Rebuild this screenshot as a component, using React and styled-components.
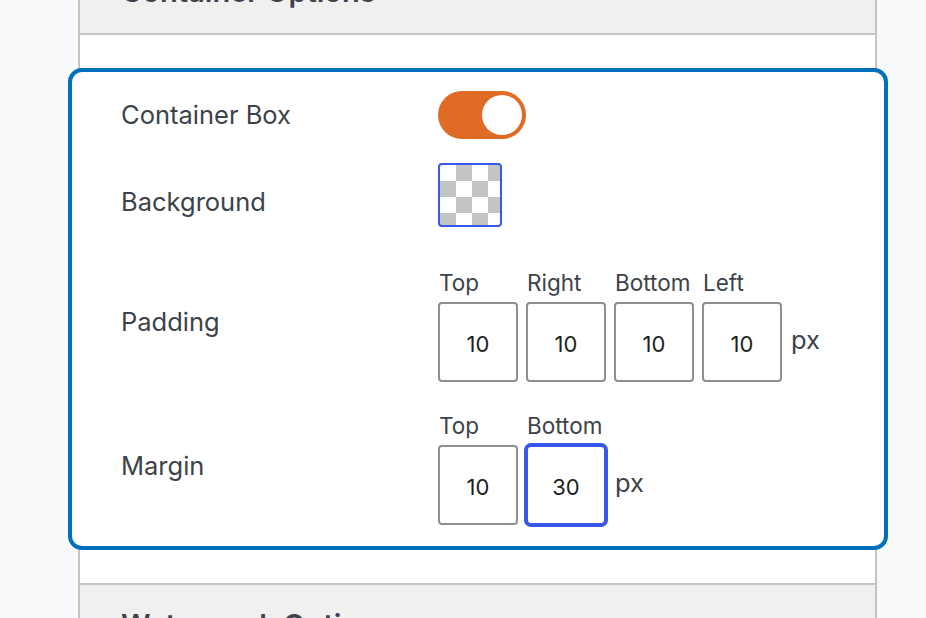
import React from "react";
import styled, { createGlobalStyle } from "styled-components";

const GlobalStyle = createGlobalStyle`
  html, body {
    margin: 0;
    padding: 0;
    background: #f8f9fb;
  }
  body {
    font-family: Inter, "Noto Sans", "Liberation Sans", sans-serif;
    color: #3c434a;
  }
`;

const App = () => {
  return (
    <>
      <GlobalStyle />
      <Page>
        <Panel>
          <PanelHeader>
            <Heading>Container Options</Heading>
          </PanelHeader>
          <PanelBody>
            <Highlight>
              <Row space={19}>
                <Label>Container Box</Label>
                <Toggle on>
                  <Knob />
                </Toggle>
              </Row>
              <Row space={24}>
                <Label down={14}>Background</Label>
                <Swatch />
              </Row>
              <Row space={43}>
                <Label up={8}>Padding</Label>
                <Fields>
                  <Field label="Top" value="10" />
                  <Field label="Right" value="10" />
                  <Field label="Bottom" value="10" />
                  <Field label="Left" value="10" />
                  <Unit>px</Unit>
                </Fields>
              </Row>
              <Row space={31}>
                <Label up={6}>Margin</Label>
                <Fields>
                  <Field label="Top" value="10" />
                  <Field label="Bottom" value="30" focused />
                  <Unit>px</Unit>
                </Fields>
              </Row>
            </Highlight>
          </PanelBody>
          <PanelHeader top>
            <Heading>Watermark Options</Heading>
          </PanelHeader>
        </Panel>
      </Page>
    </>
  );
};

const Field = ({ label, value, focused }) => (
  <FieldBox>
    <SubLabel>{label}</SubLabel>
    <NumberInput value={value} focused={focused} readOnly />
  </FieldBox>
);

export default App;

const Page = styled.div`
  display: flow-root;
  padding-left: 78px;
  height: 618px;
  overflow: hidden;
`;

const Panel = styled.div`
  width: 795px;
  margin-top: -48px;
  border-left: 2px solid #c3c4c7;
  border-right: 2px solid #c3c4c7;
  background: #fff;
`;

const PanelHeader = styled.div`
  background: #f0f0f1;
  padding: 22px 0 23px 41px;
  border-bottom: ${(p) => (p.top ? "none" : "2px solid #c3c4c7")};
  border-top: ${(p) => (p.top ? "2px solid #c3c4c7" : "none")};
`;

const Heading = styled.h2`
  margin: 0;
  font-size: 29px;
  line-height: 36px;
  font-weight: 600;
  color: #3c434a;
`;

const PanelBody = styled.div`
  padding: 33px 0;
`;

const Highlight = styled.div`
  margin: 0 -13px 0 -12px;
  border: 4px solid #0070bd;
  border-radius: 14px;
  padding: 0 0 21px 49px;
  background: #fff;
`;

const Row = styled.div`
  display: grid;
  grid-template-columns: 317px 1fr;
  align-items: center;
  margin-top: ${(p) => p.space}px;
`;

const Label = styled.div`
  font-size: 25.5px;
  line-height: 30px;
  color: #3c434a;
  padding-top: ${(p) => p.down || 0}px;
  padding-bottom: ${(p) => p.up || 0}px;
`;

const Toggle = styled.div`
  width: 88px;
  height: 48px;
  border-radius: 24px;
  background: ${(p) => (p.on ? "#e06b24" : "#8c8f94")};
  display: flex;
  align-items: center;
  justify-content: ${(p) => (p.on ? "flex-end" : "flex-start")};
  padding: 0 4px;
  box-sizing: border-box;
`;

const Knob = styled.div`
  width: 40px;
  height: 40px;
  border-radius: 50%;
  background: #fff;
`;

const Swatch = styled.div`
  width: 64px;
  height: 64px;
  box-sizing: border-box;
  border: 2px solid #3858e9;
  border-radius: 4px;
  background: repeating-conic-gradient(#c4c4c4 0 25%, #fff 0 50%) 0 0 / 32px
    32px;
`;

const Fields = styled.div`
  display: flex;
  align-items: flex-end;
  gap: 8px;
`;

const FieldBox = styled.div`
  display: flex;
  flex-direction: column;
  gap: 6px;
`;

const SubLabel = styled.div`
  font-size: 22.5px;
  line-height: 26px;
  color: #3c434a;
  padding-left: 1px;
`;

const NumberInput = styled.input`
  width: 80px;
  height: 80px;
  box-sizing: border-box;
  border: 2px solid ${(p) => (p.focused ? "#3858e9" : "#8c8f94")};
  box-shadow: ${(p) => (p.focused ? "0 0 0 2px #3858e9" : "none")};
  border-radius: ${(p) => (p.focused ? "5px" : "4px")};
  font-family: Inter, "Noto Sans", "Liberation Sans", sans-serif;
  font-size: 22px;
  color: #1e1e1e;
  text-align: center;
  padding: 3px 0 0;
  outline: none;
  background: #fff;
  margin: 0;
`;

const Unit = styled.span`
  font-size: 25.5px;
  line-height: 30px;
  color: #3c434a;
  align-self: flex-end;
  margin: 0 0 27px 1px;
`;
